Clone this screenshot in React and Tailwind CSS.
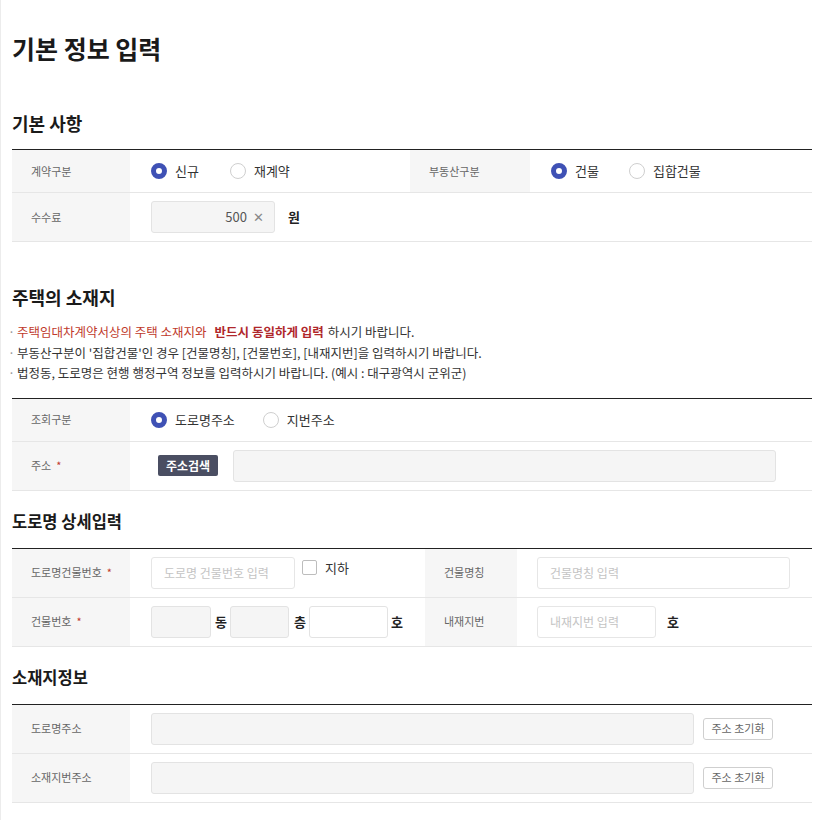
import React from "react";

const Radio = ({ checked, label }) => (
  <label className="flex items-center gap-[8px] text-[13px] text-[#333]">
    <span
      className={
        checked
          ? "w-[16px] h-[16px] rounded-full border-[5px] border-[#3f51b5] bg-white"
          : "w-[16px] h-[16px] rounded-full border border-[#cfcfcf] bg-white"
      }
    />
    <span>{label}</span>
  </label>
);

const Label = ({ children, req, w = "w-[118px]" }) => (
  <div className={`${w} shrink-0 self-stretch bg-[#f6f6f6] flex items-center pl-[19px] text-[11px] text-[#666]`}>
    {children}
    {req && <span className="ml-[5px] text-[#c0392b] text-[11px]">*</span>}
  </div>
);

const Row = ({ h = "h-[48px]", children }) => (
  <div className={`flex ${h} border-b border-[#e6e6e6]`}>{children}</div>
);

const Table = ({ children }) => <div className="border-t border-[#222]">{children}</div>;

const GrayInput = ({ className = "" }) => (
  <div className={`h-[32px] bg-[#f5f5f5] border border-[#e3e3e3] rounded-[3px] ${className}`} />
);

const TextInput = ({ placeholder, className = "" }) => (
  <div className={`h-[32px] bg-white border border-[#e6e6e6] rounded-[3px] flex items-center px-[12px] text-[12px] text-[#c4c4c4] ${className}`}>
    {placeholder}
  </div>
);

const ResetBtn = () => (
  <div className="h-[22px] w-[70px] border border-[#cfcfcf] rounded-[3px] flex items-center justify-center text-[11px] text-[#666] bg-white">
    주소 초기화
  </div>
);

export default function App() {
  return (
    <div className="min-h-[820px] bg-white border-l border-[#ececec] font-['Noto_Sans_CJK_KR','Noto_Sans',sans-serif] text-[#222]">
      <div className="pl-[11px] w-[811px] pt-[30px]">
        <h1 className="text-[25px] leading-[36px] font-bold text-[#1a1a1a]">기본 정보 입력</h1>

        <h2 className="mt-[43px] text-[18px] leading-[28px] font-bold text-[#1a1a1a]">기본 사항</h2>
        <div className="mt-[12px]">
          <Table>
            <Row h="h-[43px]">
              <Label>계약구분</Label>
              <div className="w-[280px] flex items-center pl-[21px] gap-[31px]">
                <Radio checked label="신규" />
                <Radio label="재계약" />
              </div>
              <Label w="w-[120px]">부동산구분</Label>
              <div className="flex-1 flex items-center pl-[21px] gap-[30px]">
                <Radio checked label="건물" />
                <Radio label="집합건물" />
              </div>
            </Row>
            <Row h="h-[49px]">
              <Label>수수료</Label>
              <div className="flex-1 flex items-center pl-[21px]">
                <div className="w-[124px] h-[32px] bg-[#f5f5f5] border border-[#e3e3e3] rounded-[3px] flex items-center justify-end pr-[10px] text-[13px] text-[#555]">
                  500<span className="ml-[6px] text-[#888]">✕</span>
                </div>
                <span className="ml-[13px] text-[13px] font-bold text-[#222]">원</span>
              </div>
            </Row>
          </Table>
        </div>

        <h2 className="mt-[41px] text-[18px] leading-[28px] font-bold text-[#1a1a1a]">주택의 소재지</h2>
        <div className="mt-[11px] text-[12.5px] leading-[20.5px] text-[#333] -ml-[4px]">
          <div className="flex">
            <span className="w-[9px] text-[#999]">·</span>
            <span className="text-[#c0392b]">주택임대차계약서상의 주택 소재지와</span>
            <span className="ml-[8px] font-bold text-[#b0272b]">반드시 동일하게 입력</span>
            <span className="ml-[4px]">하시기 바랍니다.</span>
          </div>
          <div className="flex">
            <span className="w-[9px] text-[#999]">·</span>
            <span>부동산구분이 '집합건물'인 경우 [건물명칭], [건물번호], [내재지번]을 입력하시기 바랍니다.</span>
          </div>
          <div className="flex">
            <span className="w-[9px] text-[#999]">·</span>
            <span>법정동, 도로명은 현행 행정구역 정보를 입력하시기 바랍니다. (예시 : 대구광역시 군위군)</span>
          </div>
        </div>
        <div className="mt-[14px]">
          <Table>
            <Row h="h-[43px]">
              <Label>조회구분</Label>
              <div className="flex-1 flex items-center pl-[21px] gap-[28px]">
                <Radio checked label="도로명주소" />
                <Radio label="지번주소" />
              </div>
            </Row>
            <Row h="h-[49px]">
              <Label req>주소</Label>
              <div className="flex-1 flex items-center pl-[28px]">
                <div className="h-[21px] w-[60px] bg-[#4a4e62] rounded-[2px] flex items-center justify-center text-[12px] font-bold text-white">
                  주소검색
                </div>
                <GrayInput className="ml-[15px] w-[543px]" />
              </div>
            </Row>
          </Table>
        </div>

        <h3 className="mt-[18px] text-[16.5px] leading-[24px] font-bold text-[#1a1a1a]">도로명 상세입력</h3>
        <div className="mt-[15px]">
          <Table>
            <Row h="h-[49px]">
              <Label req>도로명건물번호</Label>
              <div className="w-[295px] flex items-center pl-[21px]">
                <TextInput placeholder="도로명 건물번호 입력" className="w-[144px]" />
                <span className="ml-[7px] w-[15px] h-[15px] border border-[#bdbdbd] rounded-[2px] bg-white -mt-[10px]" />
                <span className="ml-[8px] text-[13px] text-[#333] -mt-[10px]">지하</span>
              </div>
              <Label w="w-[92px]">건물명칭</Label>
              <div className="flex-1 flex items-center pl-[20px]">
                <TextInput placeholder="건물명칭 입력" className="w-[253px]" />
              </div>
            </Row>
            <Row h="h-[49px]">
              <Label req>건물번호</Label>
              <div className="w-[295px] flex items-center pl-[21px]">
                <GrayInput className="w-[60px]" />
                <span className="ml-[1px] w-[18px] text-center text-[13px] font-bold">동</span>
                <GrayInput className="w-[59px]" />
                <span className="ml-[2px] w-[18px] text-center text-[13px] font-bold">층</span>
                <div className="h-[32px] w-[79px] bg-white border border-[#e3e3e3] rounded-[3px]" />
                <span className="ml-[3px] w-[12px] text-center text-[13px] font-bold">호</span>
              </div>
              <Label w="w-[92px]">내재지번</Label>
              <div className="flex-1 flex items-center pl-[20px]">
                <TextInput placeholder="내재지번 입력" className="w-[119px]" />
                <span className="ml-[11px] text-[13px] font-bold">호</span>
              </div>
            </Row>
          </Table>
        </div>

        <h3 className="mt-[18px] text-[16.5px] leading-[24px] font-bold text-[#1a1a1a]">소재지정보</h3>
        <div className="mt-[15px]">
          <Table>
            <Row h="h-[49px]">
              <Label>도로명주소</Label>
              <div className="flex-1 flex items-center pl-[21px]">
                <GrayInput className="w-[543px]" />
                <div className="ml-[9px]"><ResetBtn /></div>
              </div>
            </Row>
            <Row h="h-[49px]">
              <Label>소재지번주소</Label>
              <div className="flex-1 flex items-center pl-[21px]">
                <GrayInput className="w-[543px]" />
                <div className="ml-[9px]"><ResetBtn /></div>
              </div>
            </Row>
          </Table>
        </div>
      </div>
    </div>
  );
}
